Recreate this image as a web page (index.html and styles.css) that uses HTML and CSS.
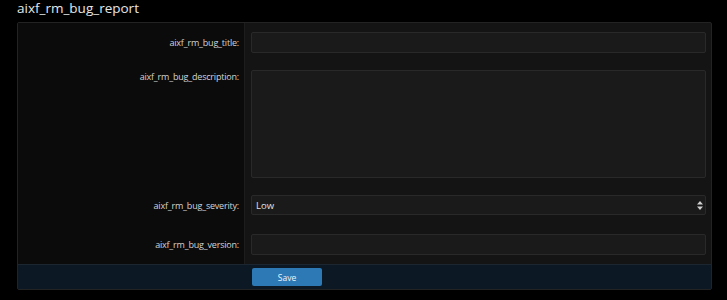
FILE: index.html
```
<!DOCTYPE html>
<html lang="en">
<head>
  <meta charset="UTF-8">
  <title>aixf_rm_bug_report</title>
  <link rel="stylesheet" href="styles.css">
</head>
<body>
  <h1 class="page-title">aixf_rm_bug_report</h1>
  <form class="block">
    <div class="row">
      <label class="row-label" for="bugTitle">aixf_rm_bug_title:</label>
      <div class="row-field"><input type="text" id="bugTitle" class="input"></div>
    </div>
    <div class="row row-tall">
      <label class="row-label" for="bugDescription">aixf_rm_bug_description:</label>
      <div class="row-field"><textarea id="bugDescription" class="input textarea"></textarea></div>
    </div>
    <div class="row">
      <label class="row-label" for="bugSeverity">aixf_rm_bug_severity:</label>
      <div class="row-field">
        <div class="select-wrap">
          <select id="bugSeverity" class="input select">
            <option>Low</option>
            <option>Medium</option>
            <option>High</option>
          </select>
          <svg class="select-arrows" width="6" height="9" viewBox="0 0 6 9">
            <path d="M3 0 L6 3.5 H0 Z M3 9 L0 5.5 H6 Z" fill="#cfcfcf"/>
          </svg>
        </div>
      </div>
    </div>
    <div class="row row-last">
      <label class="row-label" for="bugVersion">aixf_rm_bug_version:</label>
      <div class="row-field"><input type="text" id="bugVersion" class="input"></div>
    </div>
    <div class="form-footer">
      <div class="footer-spacer"></div>
      <div class="footer-actions">
        <button type="button" class="button-primary">Save</button>
      </div>
    </div>
  </form>
</body>
</html>
```

FILE: styles.css
```
body {
  margin: 0;
  padding: 0 16px 0 17px;
  background-color: #000;
  color: #d8d8d8;
  font-family: "Open Sans", "Noto Sans", sans-serif;
}

.page-title {
  margin: 0;
  height: 22px;
  font-size: 13.5px;
  font-weight: 400;
  line-height: 17px;
  color: #e6e6e6;
}

.block {
  border: 1px solid #232323;
  border-radius: 2px;
  background-color: #141414;
  width: 693px;
}

.row {
  display: grid;
  grid-template-columns: 227px 1fr;
}

.row-label {
  background-color: #0b0b0b;
  border-right: 1px solid #1d1d1d;
  padding: 9px 5px 9px 0;
  text-align: right;
  font-size: 9px;
  line-height: 21px;
  color: #d4d4d4;
  letter-spacing: -0.2px;
}

.row-tall .row-label {
  padding-top: 4px;
}

.row-field {
  padding: 9px 5px 9px 6px;
}

.row-tall .row-field {
  padding-top: 8px;
  padding-bottom: 8px;
}

.row-last .row-field {
  padding-bottom: 8px;
}

.input {
  display: block;
  box-sizing: border-box;
  width: 100%;
  height: 21px;
  margin: 0;
  padding: 0 5px;
  background-color: #1a1a1a;
  border: 1px solid #292929;
  border-radius: 2px;
  color: #e0e0e0;
  font-family: inherit;
  font-size: 9.5px;
}

.textarea {
  height: 108px;
  resize: none;
}

.select-wrap {
  position: relative;
}

.select {
  -webkit-appearance: none;
  appearance: none;
  height: 20px;
  padding-left: 4px;
  outline: none;
}

.select-arrows {
  position: absolute;
  right: 3px;
  top: 6px;
}

.form-footer {
  display: grid;
  grid-template-columns: 227px 1fr;
  background-color: #0c1924;
  border-top: 1px solid #1c2630;
  height: 24px;
}

.footer-actions {
  padding: 3px 0 0 7px;
}

.button-primary {
  display: block;
  width: 70px;
  height: 18px;
  padding: 0;
  background-color: #2c79b5;
  border: none;
  border-radius: 2px;
  color: #f0f4f8;
  font-family: inherit;
  font-size: 8.5px;
  cursor: pointer;
}
```
